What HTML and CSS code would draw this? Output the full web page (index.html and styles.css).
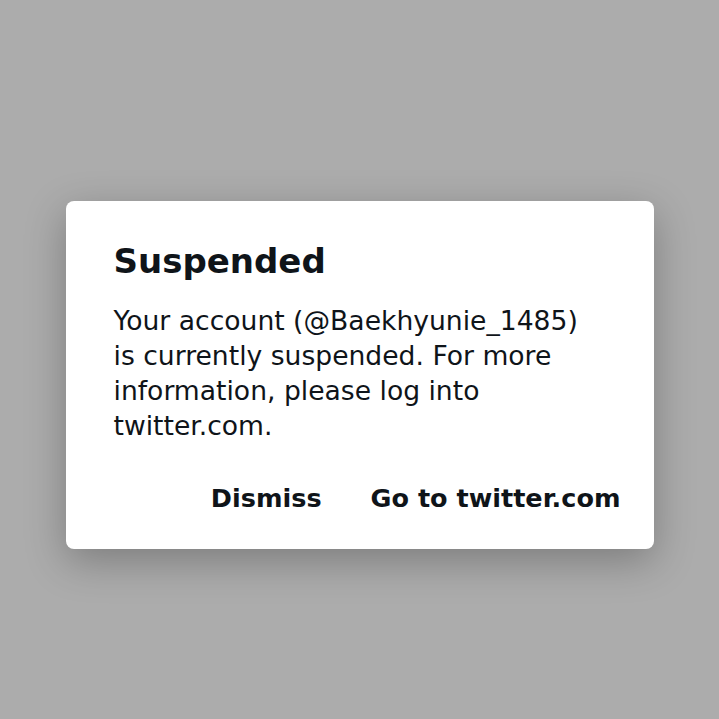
FILE: index.html
```html
<!DOCTYPE html>
<html lang="en">
<head>
<meta charset="utf-8">
<link rel="stylesheet" href="styles.css">
</head>
<body>
<div class="page">
  <div class="dialog">
    <h1 class="title">Suspended</h1>
    <p class="message">Your account (@Baekhyunie_1485) is currently suspended. For more information, please log into twitter.com.</p>
    <div class="actions">
      <span class="action">Dismiss</span>
      <span class="action">Go to twitter.com</span>
    </div>
  </div>
</div>
</body>
</html>
```
FILE: styles.css
```css
html, body {
  margin: 0;
  padding: 0;
  background: #acacac;
}
.page {
  width: 719px;
  height: 719px;
  display: flex;
  justify-content: center;
  padding-top: 201px;
  box-sizing: border-box;
}
.dialog {
  width: 588px;
  height: 348px;
  box-sizing: border-box;
  background: #ffffff;
  border-radius: 8px;
  box-shadow: 0 12px 40px rgba(0, 0, 0, 0.28);
  padding: 40px 33px 0 48px;
  font-family: "DejaVu Sans", sans-serif;
  color: #0f1419;
}
.title {
  margin: 0;
  font-size: 34px;
  font-weight: 700;
  line-height: 40px;
}
.message {
  margin: 22px 0 0 0;
  font-size: 26.6px;
  line-height: 35px;
  font-weight: 400;
  width: 480px;
}
.actions {
  display: flex;
  justify-content: flex-end;
  gap: 49px;
  margin-top: 38px;
}
.action {
  font-size: 25.5px;
  font-weight: 700;
  line-height: 35px;
}
```
